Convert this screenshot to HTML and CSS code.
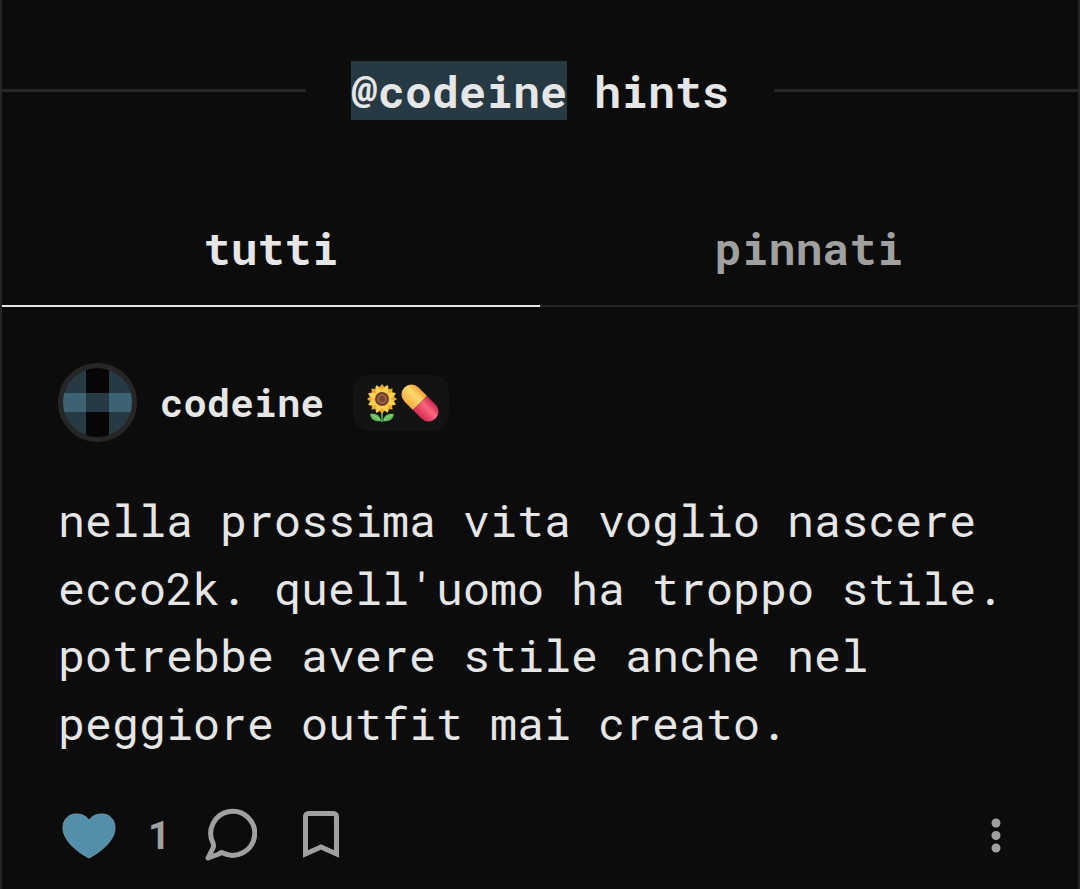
FILE: index.html
```html
<!DOCTYPE html>
<html lang="it">
<head>
    <meta charset="UTF-8">
    <meta name="viewport" content="width=device-width, initial-scale=1.0">
    <title>@codeine hints</title>
    <link rel="stylesheet" href="styles.css">
</head>
<body>
    <main class="feed">
        <header class="feed-header">
            <h1 class="feed-title"><span class="handle">@codeine</span> hints</h1>
        </header>

        <nav class="tabs">
            <button class="tab active" type="button">tutti</button>
            <button class="tab" type="button">pinnati</button>
        </nav>

        <article class="post">
            <div class="post-author">
                <svg class="avatar" viewBox="0 0 79 79" aria-hidden="true">
                    <clipPath id="avatarClip"><circle cx="39.5" cy="39.5" r="35"/></clipPath>
                    <g clip-path="url(#avatarClip)">
                        <rect width="79" height="79" fill="#273a43"/>
                        <rect y="30" width="79" height="19" fill="#3c6273"/>
                        <rect x="28" width="23" height="79" fill="#060606"/>
                        <rect x="28" y="30" width="23" height="19" fill="#273a43"/>
                    </g>
                    <circle cx="39.5" cy="39.5" r="37" fill="none" stroke="#262626" stroke-width="5"/>
                </svg>
                <a class="author-name" href="#">codeine</a>
                <span class="badge">
                    <svg class="emoji" viewBox="0 0 38 40" role="img" aria-label="girasole">
                        <path d="M19 23v16" stroke="#3f9a46" stroke-width="2" fill="none"/>
                        <path d="M18 38C11 39 8 36 7 31c6-1 10 1 11 7zM20 38c7 1 10-2 11-7-6-1-10 1-11 7z" fill="#65b95f"/>
                        <path d="M9 32q5 2 8 5M29 32q-5 2-8 5" stroke="#a1d982" stroke-width="1" fill="none"/>
                        <g fill="#f0a92c">
                            <path id="petal" d="M19 1q-5 5-2 11h4q3-6-2-11z"/>
                            <use href="#petal" transform="rotate(45 19 16)"/>
                            <use href="#petal" transform="rotate(90 19 16)"/>
                            <use href="#petal" transform="rotate(135 19 16)"/>
                            <use href="#petal" transform="rotate(180 19 16)"/>
                            <use href="#petal" transform="rotate(225 19 16)"/>
                            <use href="#petal" transform="rotate(270 19 16)"/>
                            <use href="#petal" transform="rotate(315 19 16)"/>
                        </g>
                        <g fill="#ffd04e">
                            <path id="petalFront" d="M19 1q-5 5-2 11h4q3-6-2-11z" transform="rotate(22 19 16)"/>
                            <use href="#petalFront" transform="rotate(45 19 16)"/>
                            <use href="#petalFront" transform="rotate(90 19 16)"/>
                            <use href="#petalFront" transform="rotate(135 19 16)"/>
                            <use href="#petalFront" transform="rotate(180 19 16)"/>
                            <use href="#petalFront" transform="rotate(225 19 16)"/>
                            <use href="#petalFront" transform="rotate(270 19 16)"/>
                            <use href="#petalFront" transform="rotate(315 19 16)"/>
                        </g>
                        <circle cx="19" cy="16" r="7" fill="#6b3d2b"/>
                        <circle cx="19" cy="16" r="5" fill="#9b6045"/>
                        <circle cx="19" cy="16" r="3" fill="#784530"/>
                    </svg>
                    <svg class="emoji" viewBox="0 0 38 40" role="img" aria-label="pillola">
                        <defs>
                            <linearGradient id="pillTop" x1="0" y1="0" x2="0" y2="1">
                                <stop offset="0" stop-color="#f2a33c"/>
                                <stop offset=".4" stop-color="#ffd86e"/>
                                <stop offset="1" stop-color="#f5ad42"/>
                            </linearGradient>
                            <linearGradient id="pillBottom" x1="0" y1="0" x2="0" y2="1">
                                <stop offset="0" stop-color="#c9254a"/>
                                <stop offset=".4" stop-color="#f9657d"/>
                                <stop offset="1" stop-color="#d22c50"/>
                            </linearGradient>
                        </defs>
                        <g transform="rotate(45 19 20)">
                            <path d="M19 10H7a10 10 0 0 0 0 20h12z" fill="url(#pillTop)"/>
                            <path d="M19 10h12a10 10 0 0 1 0 20H19z" fill="url(#pillBottom)"/>
                        </g>
                    </svg>
                </span>
            </div>

            <p class="post-content">nella prossima vita voglio nascere ecco2k. quell'uomo ha troppo stile. potrebbe avere stile anche nel peggiore outfit mai creato.</p>

            <div class="post-actions">
                <button class="action like" type="button" aria-label="Mi piace">
                    <svg width="56" height="56" viewBox="0 0 56 56">
                        <path d="M28 51C18 46 2 34 2 21 2 12 8 7 15 7c6 0 10 2 13 6 3-4 7-6 13-6 7 0 13 5 13 14 0 13-16 25-26 30z" fill="#538eab" stroke="#7198aa"/>
                    </svg>
                    <span class="count">1</span>
                </button>
                <button class="action comment" type="button" aria-label="Commenta">
                    <svg width="54" height="56" viewBox="0 0 54 56">
                        <path d="M20 46A22 22 0 1 0 10 36Q11 39 10 41L5 51L16 47Q18 45 20 46Z" fill="none" stroke="#a0a0a0" stroke-width="5" stroke-linejoin="round"/>
                    </svg>
                </button>
                <button class="action" type="button" aria-label="Salva">
                    <svg width="38" height="56" viewBox="0 0 38 56">
                        <path d="M3.5 47V9.5a3 3 0 0 1 3-3h25a3 3 0 0 1 3 3V47L19 40z" fill="none" stroke="#a0a0a0" stroke-width="5"/>
                    </svg>
                </button>
                <button class="action more" type="button" aria-label="Altro">
                    <svg width="10" height="56" viewBox="0 0 10 56">
                        <g fill="#a0a0a0">
                            <circle cx="5" cy="16" r="4.5"/>
                            <circle cx="5" cy="28.5" r="4.5"/>
                            <circle cx="5" cy="41" r="4.5"/>
                        </g>
                    </svg>
                </button>
            </div>
        </article>
    </main>
</body>
</html>
```
FILE: styles.css
```css
:root {
    --bg: #0c0c0c;
    --badge: #131313;
    --line: #262626;
    --text-primary: #e6e6e6;
    --text-secondary: #a0a0a0;
    --highlight: #273a43;
}

* {
    box-sizing: border-box;
}

body {
    margin: 0;
    background: var(--bg);
    color: var(--text-primary);
    font-family: "Roboto Mono", "DejaVu Sans Mono", monospace;
    font-size: 45px;
    line-height: 1.5;
}

button {
    padding: 0;
    border: none;
    background: none;
    color: inherit;
    font: inherit;
    cursor: pointer;
}

.feed {
    min-height: 100vh;
    border-left: 2px solid var(--line);
    border-right: 2px solid var(--line);
}

.feed-header {
    display: flex;
    align-items: center;
    gap: 45px;
    padding: 61px 0 60px;
}

.feed-header::before,
.feed-header::after {
    content: '';
    flex: 1;
    height: 3px;
    background: var(--line);
}

.feed-title {
    margin: 0;
    font-size: 45px;
    line-height: 59px;
}

.handle {
    display: inline-block;
    background: var(--highlight);
}

.tabs {
    display: flex;
}

.tab {
    flex: 1;
    padding: 40px 0 30px;
    border-bottom: 2px solid var(--line);
    color: var(--text-secondary);
    font-weight: bold;
    line-height: 55px;
}

.tab.active {
    border-color: var(--text-primary);
    color: var(--text-primary);
}

.post {
    padding: 56px 56px 24px;
}

.post-author {
    display: flex;
    align-items: center;
}

.avatar {
    width: 79px;
    height: 79px;
    margin-right: 23px;
}

.author-name {
    margin-right: 29px;
    color: inherit;
    font-size: 39px;
    font-weight: bold;
    text-decoration: none;
}

.badge {
    display: flex;
    padding: 8px 10px;
    border-radius: 17px;
    background: var(--badge);
}

.emoji {
    width: 38px;
    height: 40px;
}

.post-content {
    margin: 44px 0 51px;
}

.post-actions {
    display: flex;
    align-items: center;
    padding: 0 21px 0 3px;
}

.action {
    display: flex;
    align-items: center;
}

.action svg {
    display: block;
}

.count {
    margin-left: 31px;
    padding-top: 3px;
    color: var(--text-secondary);
    font-family: Roboto, sans-serif;
    font-size: 39px;
    font-weight: bold;
    line-height: 53px;
}

.comment {
    margin: 0 45px 0 33px;
}

.more {
    margin-left: auto;
}
```
